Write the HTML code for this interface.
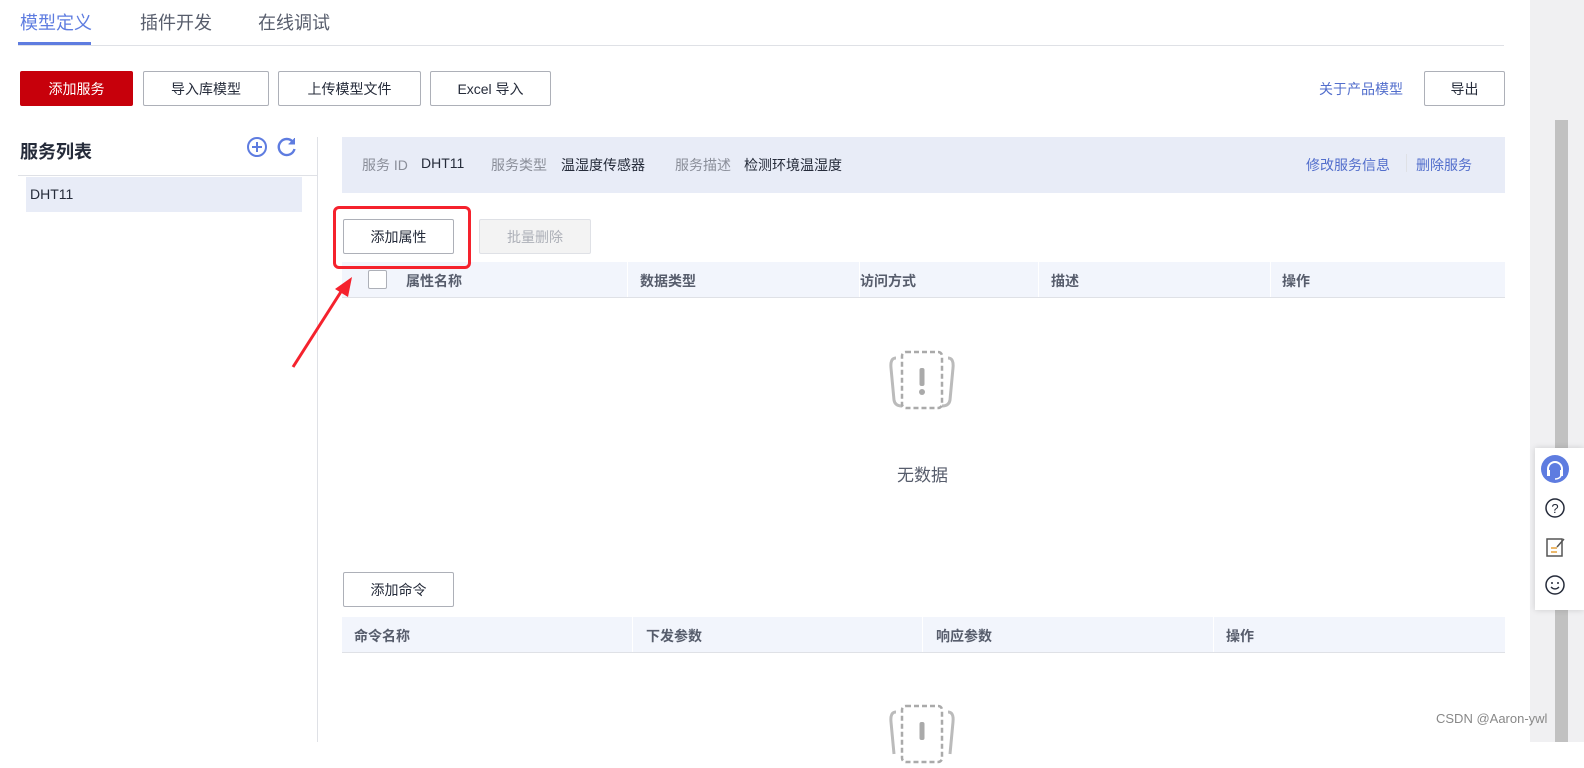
<!DOCTYPE html>
<html><head><meta charset="utf-8"><style>
*{margin:0;padding:0;box-sizing:border-box}
body{width:1584px;height:742px;overflow:hidden;background:#fff;font-family:"Liberation Sans","Noto Sans CJK SC",sans-serif;font-size:14px;color:#252b3a;position:relative}
.a{position:absolute}
.btn{position:absolute;height:35px;border:1px solid #adb0b8;border-radius:2px;background:#fff;display:flex;align-items:center;justify-content:center;font-size:14px;color:#252b3a}
.th{position:absolute;height:36px;background:#f2f5fc;border-bottom:1px solid #dfe1e6;font-weight:bold;color:#575d6c;font-size:14px}
.th span{position:absolute;top:9px}
.sep{position:absolute;top:0;width:1px;height:35px;background:#fff}
.lnk{color:#526ecc}
</style></head><body>
<div class="a" style="left:20px;top:9px;font-size:18px;color:#5e7ce0">模型定义</div>
<div class="a" style="left:140px;top:9px;font-size:18px;color:#575d6c">插件开发</div>
<div class="a" style="left:258px;top:9px;font-size:18px;color:#575d6c">在线调试</div>
<div class="a" style="left:18px;top:45px;width:1486px;height:1px;background:#dfe1e6"></div>
<div class="a" style="left:18px;top:42px;width:73px;height:3px;background:#5e7ce0"></div>

<div class="btn" style="left:20px;top:71px;width:113px;background:#c7000b;border-color:#c7000b;color:#fff">添加服务</div>
<div class="btn" style="left:143px;top:71px;width:126px">导入库模型</div>
<div class="btn" style="left:278px;top:71px;width:143px">上传模型文件</div>
<div class="btn" style="left:430px;top:71px;width:121px">Excel 导入</div>
<div class="a lnk" style="left:1319px;top:79px">关于产品模型</div>
<div class="btn" style="left:1424px;top:71px;width:81px">导出</div>

<div class="a" style="left:20px;top:138px;font-size:18px;font-weight:bold;color:#252b3a">服务列表</div>
<svg class="a" style="left:246px;top:136px" width="22" height="22" viewBox="0 0 22 22"><circle cx="11" cy="11" r="9" fill="none" stroke="#5e7ce0" stroke-width="2"/><path d="M11 6v10M6 11h10" stroke="#5e7ce0" stroke-width="2"/></svg>
<svg class="a" style="left:276px;top:136px" width="22" height="22" viewBox="0 0 22 22"><path d="M17 6A8 8 0 1 0 18.5 13" fill="none" stroke="#5e7ce0" stroke-width="2.4"/><path d="M18.5 2v6h-6" fill="#5e7ce0" stroke="#5e7ce0" stroke-width="1"/></svg>
<div class="a" style="left:18px;top:175px;width:299px;height:1px;background:#dfe1e6"></div>
<div class="a" style="left:26px;top:177px;width:276px;height:35px;background:#e8ecf7"></div>
<div class="a" style="left:30px;top:186px">DHT11</div>
<div class="a" style="left:317px;top:137px;width:1px;height:605px;background:#dfe1e6"></div>

<div class="a" style="left:342px;top:137px;width:1163px;height:56px;background:#e8ecf7"></div>
<div class="a" style="left:362px;top:155px;color:#8a8e99">服务 ID</div>
<div class="a" style="left:421px;top:155px">DHT11</div>
<div class="a" style="left:491px;top:155px;color:#8a8e99">服务类型</div>
<div class="a" style="left:561px;top:155px">温湿度传感器</div>
<div class="a" style="left:675px;top:155px;color:#8a8e99">服务描述</div>
<div class="a" style="left:744px;top:155px">检测环境温湿度</div>
<div class="a lnk" style="left:1306px;top:155px">修改服务信息</div>
<div class="a" style="left:1406px;top:154px;width:1px;height:18px;background:#dfe1e6"></div>
<div class="a lnk" style="left:1416px;top:155px">删除服务</div>

<div class="btn" style="left:343px;top:219px;width:111px">添加属性</div>
<div class="btn" style="left:479px;top:219px;width:112px;background:#f3f3f3;border-color:#dfe1e6;color:#adb0b8">批量删除</div>

<div class="th" style="left:342px;top:262px;width:1163px">
<div class="a" style="left:26px;top:8px;width:19px;height:19px;border:1px solid #adb0b8;border-radius:2px;background:#fff"></div>
<span style="left:64px">属性名称</span><div class="sep" style="left:285px"></div>
<span style="left:298px">数据类型</span><div class="sep" style="left:517px"></div>
<span style="left:518px">访问方式</span><div class="sep" style="left:696px"></div>
<span style="left:709px">描述</span><div class="sep" style="left:928px"></div>
<span style="left:940px">操作</span></div>
<div class="a" style="left:333px;top:206px;width:138px;height:63px;border:3px solid #f5222d;border-radius:6px"></div>

<svg class="a" style="left:290px;top:275px" width="70" height="95" viewBox="0 0 70 95"><path d="M3 92 L54 12" stroke="#f5222d" stroke-width="3"/><path d="M62 2 L45 14 L58 22 Z" fill="#f5222d"/></svg>

<svg class="a" style="left:886px;top:348px" width="72" height="66" viewBox="0 0 72 66"><path d="M10 10 Q4 10 5 20 L8 52 Q9 58 16 58" fill="none" stroke="#bbb" stroke-width="3"/><path d="M62 10 Q68 10 67 20 L64 52 Q63 58 56 58" fill="none" stroke="#bbb" stroke-width="3"/><rect x="16" y="4" width="40" height="56" rx="4" fill="#fff" stroke="#aaa" stroke-width="2.5" stroke-dasharray="5 3"/><rect x="33.5" y="20" width="5" height="18" rx="2" fill="#aaa"/><circle cx="36" cy="44" r="3" fill="#aaa"/></svg>
<div class="a" style="left:897px;top:461px;font-size:17px;color:#575d6c">无数据</div>

<div class="btn" style="left:343px;top:572px;width:111px">添加命令</div>
<div class="th" style="left:342px;top:617px;width:1163px">
<span style="left:12px">命令名称</span><div class="sep" style="left:290px"></div>
<span style="left:304px">下发参数</span><div class="sep" style="left:580px"></div>
<span style="left:594px">响应参数</span><div class="sep" style="left:871px"></div>
<span style="left:884px">操作</span></div>
<svg class="a" style="left:886px;top:702px" width="72" height="66" viewBox="0 0 72 66"><path d="M10 10 Q4 10 5 20 L8 52" fill="none" stroke="#bbb" stroke-width="3"/><path d="M62 10 Q68 10 67 20 L64 52" fill="none" stroke="#bbb" stroke-width="3"/><rect x="16" y="4" width="40" height="56" rx="4" fill="#fff" stroke="#aaa" stroke-width="2.5" stroke-dasharray="5 3"/><rect x="33.5" y="20" width="5" height="18" rx="2" fill="#aaa"/></svg>

<div class="a" style="left:1530px;top:0;width:54px;height:742px;background:#f0f0f2"></div>
<div class="a" style="left:1555px;top:120px;width:13px;height:622px;background:#c1c1c1"></div>
<div class="a" style="left:1436px;top:711px;font-size:13px;color:#888">CSDN @Aaron-ywl</div>
<div class="a" style="left:1535px;top:448px;width:49px;height:162px;background:#fff;box-shadow:0 0 6px rgba(0,0,0,.15)"></div>
<svg class="a" style="left:1540px;top:455px" width="44" height="150" viewBox="0 0 44 150"><circle cx="15" cy="14" r="14" fill="#5e7ce0"/><path d="M8 18v-4a7 7 0 0 1 14 0v4" fill="none" stroke="#fff" stroke-width="2"/><rect x="7" y="15" width="3" height="6" fill="#fff"/><rect x="20" y="15" width="3" height="6" fill="#fff"/><path d="M21 21q-2 3-6 3" fill="none" stroke="#fff" stroke-width="1.5"/><circle cx="15" cy="53" r="9" fill="none" stroke="#252b3a" stroke-width="1.5"/><text x="15" y="58" font-size="13" text-anchor="middle" fill="#252b3a" font-family="Liberation Sans">?</text><rect x="7" y="84" width="15" height="17" fill="none" stroke="#555" stroke-width="1.5"/><path d="M11 93h6M11 97h6" stroke="#e6a23c" stroke-width="1.5"/><path d="M17 92l7-8" stroke="#555" stroke-width="1.5"/><circle cx="15" cy="130" r="9" fill="none" stroke="#252b3a" stroke-width="1.5"/><circle cx="12" cy="128" r="1" fill="#252b3a"/><circle cx="18" cy="128" r="1" fill="#252b3a"/><path d="M11 132q4 4 8 0" fill="none" stroke="#252b3a" stroke-width="1.3"/></svg>
</body></html>
